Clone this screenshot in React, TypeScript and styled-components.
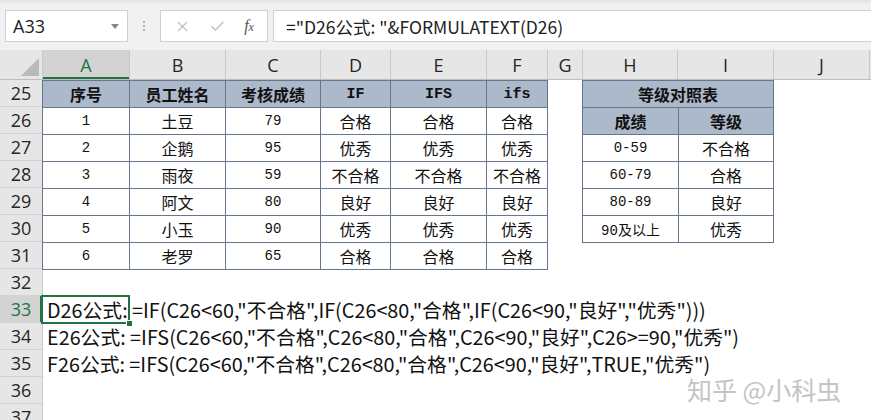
import { createGlobalStyle } from 'styled-components';
import styled from 'styled-components';
import { X, Check } from 'lucide-react';

const GREEN = '#217346';
const LINE = '#66768c';
const FILL = '#acb9ca';
const HEAD_BG = '#e6e6e6';

const GlobalStyle = createGlobalStyle`
  html, body { margin: 0; padding: 0; background: #fff; }
  body { overflow: hidden; }
  * { box-sizing: border-box; }
`;

// 열 너비 (A ~ J).
const COLS = ['A', 'B', 'C', 'D', 'E', 'F', 'G', 'H', 'I', 'J'];
const COL_W = [87, 96, 95, 70, 96, 61, 35, 95, 96, 96];
const ROWS = [25, 26, 27, 28, 29, 30, 31, 32, 33, 34, 35, 36, 37];

const STAFF = [
  [1, '土豆', 79, '合格', '合格', '合格'],
  [2, '企鹅', 95, '优秀', '优秀', '优秀'],
  [3, '雨夜', 59, '不合格', '不合格', '不合格'],
  [4, '阿文', 80, '良好', '良好', '良好'],
  [5, '小玉', 90, '优秀', '优秀', '优秀'],
  [6, '老罗', 65, '合格', '合格', '合格'],
];

const GRADES = [
  ['0-59', '不合格'],
  ['60-79', '合格'],
  ['80-89', '良好'],
  ['90及以上', '优秀'],
];

const FORMULAS = [
  'D26公式: =IF(C26<60,"不合格",IF(C26<80,"合格",IF(C26<90,"良好","优秀")))',
  'E26公式: =IFS(C26<60,"不合格",C26<80,"合格",C26<90,"良好",C26>=90,"优秀")',
  'F26公式: =IFS(C26<60,"不合格",C26<80,"合格",C26<90,"良好",TRUE,"优秀")',
];

const App = () => {
  return (
    <Window>
      <GlobalStyle />
      <Toolbar>
        <NameBox>
          <span>A33</span>
          <Caret />
        </NameBox>
        <Grip>
          <i /><i /><i />
        </Grip>
        <ActionBox>
          <X size={17} strokeWidth={1.6} color="#bdbdbd" />
          <Check size={17} strokeWidth={1.8} color="#bdbdbd" />
          <Fx>f<small>x</small></Fx>
        </ActionBox>
        <FormulaInput>="D26公式: "&amp;FORMULATEXT(D26)</FormulaInput>
      </Toolbar>

      <HeaderRow>
        <Corner>
          <svg width="22" height="22" viewBox="0 0 22 22">
            <polygon points="21,3 21,21 3,21" fill="#b9b9b9" />
          </svg>
        </Corner>
        {COLS.map((c, i) => (
          <ColHeader key={c} $w={COL_W[i]} $selected={c === 'A'}>{c}</ColHeader>
        ))}
      </HeaderRow>

      <Body>
        <RowHeaders>
          {ROWS.map(r => (
            <RowHeader key={r} $selected={r === 33}>{r}</RowHeader>
          ))}
        </RowHeaders>

        <Canvas>
          {/* 직원 성적 표 */}
          <Table $cols="86px 95px 94px 69px 95px 60px" $col="1 / 7" $row="1 / 8">
            <TCell $head>序号</TCell>
            <TCell $head>员工姓名</TCell>
            <TCell $head>考核成绩</TCell>
            <TCell $head $mono>IF</TCell>
            <TCell $head $mono>IFS</TCell>
            <TCell $head $mono>ifs</TCell>
            {STAFF.map(row => row.map((v, i) => (
              <TCell key={`${row[0]}-${i}`} $mono={typeof v === 'number'}>{v}</TCell>
            )))}
          </Table>

          {/* 등급 대조표 */}
          <Table $cols="95px 94px" $col="8 / 10" $row="1 / 7">
            <TCell $head $span={2}>等级对照表</TCell>
            <TCell $head>成绩</TCell>
            <TCell $head>等级</TCell>
            {GRADES.map(([range, grade]) => [
              <TCell key={range} $mono>{range}</TCell>,
              <TCell key={range + grade}>{grade}</TCell>,
            ])}
          </Table>

          {FORMULAS.map((f, i) => (
            <FormulaLine key={i} $row={9 + i}>{f}</FormulaLine>
          ))}

          <Selection $row={9}>
            <Handle />
          </Selection>
        </Canvas>
      </Body>

      <Watermark>知乎 @小科虫</Watermark>
    </Window>
  );
}

export default App;

const Window = styled.div`
  position: relative;
  width: 871px;
  height: 420px;
  overflow: hidden;
  background: #fff;
  font-family: "Noto Sans CJK SC", "Noto Sans", sans-serif;
  color: #222;
`;

const Toolbar = styled.div`
  display: flex;
  align-items: flex-start;
  height: 50px;
  padding: 10px 0 0 5px;
  background: linear-gradient(#e2e2e2 0, #f1f1f1 5px, #f1f1f1 100%);
`;

const NameBox = styled.div`
  display: flex;
  align-items: center;
  justify-content: space-between;
  width: 123px;
  height: 32px;
  padding: 0 8px 0 7px;
  background: #fff;
  border: 1px solid #cfcfcf;
  font-family: "Open Sans", "Liberation Sans", sans-serif;
  font-size: 18px;
  color: #222;
`;

const Caret = styled.span`
  width: 0;
  height: 0;
  border-left: 4px solid transparent;
  border-right: 4px solid transparent;
  border-top: 5px solid #888;
`;

const Grip = styled.div`
  display: flex;
  flex-direction: column;
  gap: 2px;
  width: 32px;
  height: 32px;
  align-items: center;
  justify-content: center;

  i {
    width: 2px;
    height: 2px;
    background: #b3b3b3;
  }
`;

const ActionBox = styled.div`
  display: flex;
  align-items: center;
  justify-content: space-around;
  width: 108px;
  height: 32px;
  padding: 0 4px;
  background: #fff;
  border: 1px solid #cfcfcf;
`;

const Fx = styled.span`
  font-family: "Liberation Serif", serif;
  font-style: italic;
  font-size: 16px;
  color: #555;

  small {
    font-size: 12px;
  }
`;

const FormulaInput = styled.div`
  flex: 1;
  height: 32px;
  margin-left: 5px;
  padding-left: 12px;
  display: flex;
  align-items: center;
  background: #fff;
  border: 1px solid #cfcfcf;
  border-right: none;
  font-size: 17.5px;
  color: #222;
  white-space: nowrap;
`;

const HeaderRow = styled.div`
  display: flex;
  height: 30px;
  background: ${HEAD_BG};
  border-bottom: 1px solid #bdbdbd;
`;

const Corner = styled.div`
  width: 43px;
  display: flex;
  align-items: flex-end;
  justify-content: flex-end;
  padding: 0 2px 2px 0;
  border-right: 1px solid #c9c9c9;
`;

const ColHeader = styled.div<{ $w: number; $selected?: boolean }>`
  width: ${p => p.$w}px;
  flex: none;
  display: flex;
  align-items: center;
  justify-content: center;
  border-right: 1px solid #c9c9c9;
  font-family: "Open Sans", "Liberation Sans", sans-serif;
  font-size: 18px;
  color: ${p => (p.$selected ? GREEN : '#262626')};
  background: ${p => (p.$selected ? '#d3d3d3' : 'transparent')};
  box-shadow: ${p => (p.$selected ? `inset 0 -2px 0 ${GREEN}` : 'none')};
`;

const Body = styled.div`
  display: flex;
`;

const RowHeaders = styled.div`
  display: flex;
  flex-direction: column;
  width: 43px;
  background: ${HEAD_BG};
  border-right: 1px solid #c9c9c9;
`;

const RowHeader = styled.div<{ $selected?: boolean }>`
  height: 27px;
  display: flex;
  align-items: center;
  justify-content: center;
  border-bottom: 1px solid #d2d2d2;
  font-family: "Open Sans", "Liberation Sans", sans-serif;
  font-size: 18px;
  color: ${p => (p.$selected ? GREEN : '#262626')};
  background: ${p => (p.$selected ? '#d3d3d3' : 'transparent')};
  box-shadow: ${p => (p.$selected ? `inset -2px 0 0 ${GREEN}` : 'none')};
`;

const Canvas = styled.div`
  display: grid;
  grid-template-columns: ${COL_W.map(w => `${w}px`).join(' ')};
  grid-template-rows: repeat(13, 27px);
`;

const Table = styled.div<{ $cols: string; $col: string; $row: string }>`
  grid-column: ${p => p.$col};
  grid-row: ${p => p.$row};
  align-self: start;
  justify-self: start;
  display: grid;
  grid-template-columns: ${p => p.$cols};
  grid-auto-rows: 26px;
  gap: 1px;
  background: ${LINE};
  border: 1px solid ${LINE};
  margin-left: -1px;
`;

const TCell = styled.div<{ $head?: boolean; $mono?: boolean; $span?: number }>`
  grid-column: ${p => (p.$span ? `span ${p.$span}` : 'auto')};
  display: flex;
  align-items: center;
  justify-content: center;
  background: ${p => (p.$head ? FILL : '#fff')};
  font-family: ${p => (p.$mono ? '"Liberation Mono", "Noto Sans CJK SC", monospace' : '"Noto Sans CJK SC", sans-serif')};
  font-size: ${p => (p.$mono ? (p.$head ? '15px' : '14px') : '16px')};
  font-weight: ${p => (p.$head ? 700 : 400)};
  color: #111;
  white-space: nowrap;
`;

const FormulaLine = styled.div<{ $row: number }>`
  grid-column: 1 / -1;
  grid-row: ${p => p.$row};
  display: flex;
  align-items: center;
  padding-left: 4px;
  font-size: 19.8px;
  color: #111;
  white-space: nowrap;
`;

const Selection = styled.div<{ $row: number }>`
  grid-column: 1;
  grid-row: ${p => p.$row};
  position: relative;
  margin: -1px 0 -1px -2px;
  border: 2px solid ${GREEN};
`;

const Handle = styled.span`
  position: absolute;
  right: -5px;
  bottom: -5px;
  width: 7px;
  height: 7px;
  background: ${GREEN};
  border: 1px solid #fff;
`;

const Watermark = styled.div`
  position: absolute;
  left: 687px;
  top: 371px;
  font-size: 25px;
  color: #c4c4c4;
  text-shadow: 0 0 2px #fff;
  white-space: nowrap;
`;
